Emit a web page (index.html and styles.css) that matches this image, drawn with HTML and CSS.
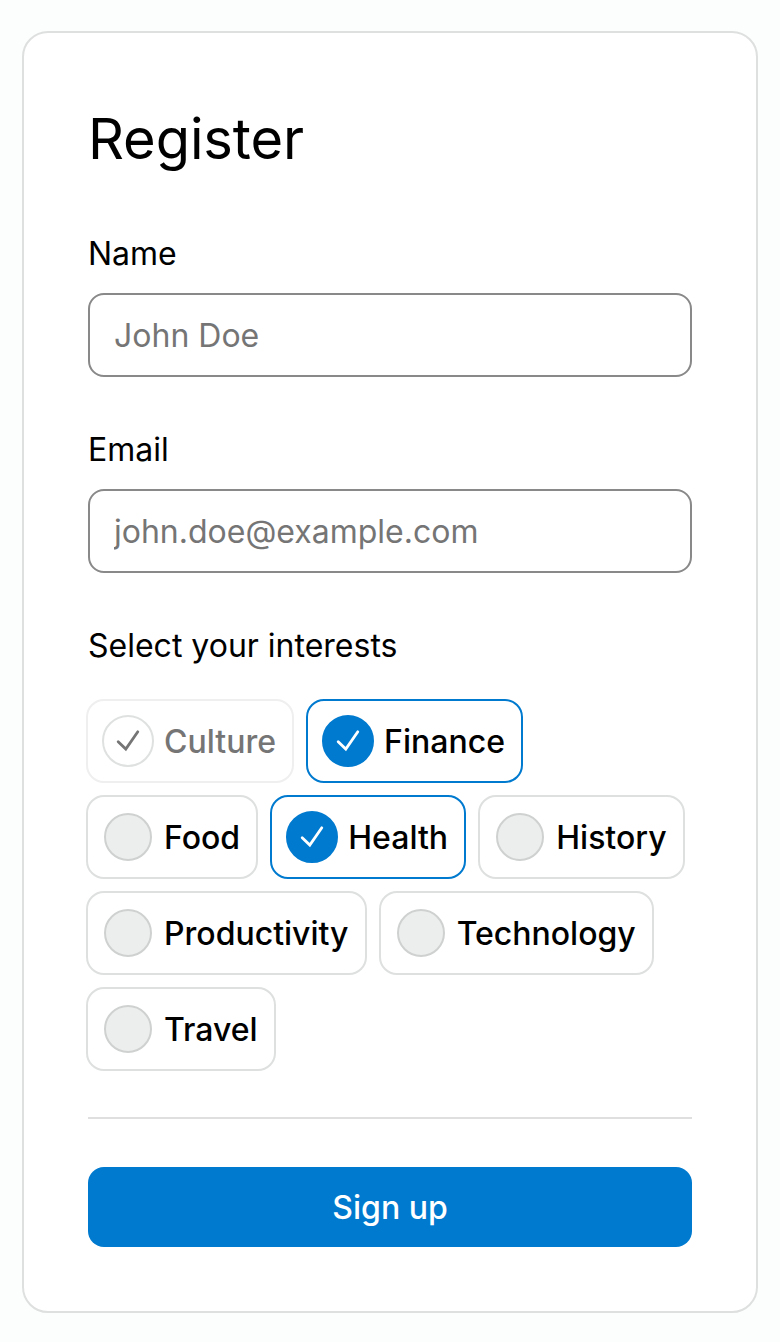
FILE: index.html
```html
<!DOCTYPE html>
<html lang="en">
<head>
<meta charset="utf-8">
<title>Register</title>
<link rel="stylesheet" href="styles.css">
</head>
<body>
<form class="card">
  <h1 class="title">Register</h1>
  <div class="field">
    <label class="label" for="name">Name</label>
    <input class="input" id="name" type="text" placeholder="John Doe">
  </div>
  <div class="field">
    <label class="label" for="email">Email</label>
    <input class="input" id="email" type="email" placeholder="john.doe@example.com">
  </div>
  <div class="label interests">Select your interests</div>
  <div class="chips">
    <span class="chip disabled"><span class="mark"><svg class="tick" viewBox="0 0 24 24"><path d="M2.2 12.8 L9.8 20 L21.8 2.8"/></svg></span>Culture</span>
    <span class="chip selected"><span class="mark"><svg class="tick" viewBox="0 0 24 24"><path d="M2.2 12.8 L9.8 20 L21.8 2.8"/></svg></span>Finance</span>
    <span class="chip"><span class="mark"></span>Food</span>
    <span class="chip selected"><span class="mark"><svg class="tick" viewBox="0 0 24 24"><path d="M2.2 12.8 L9.8 20 L21.8 2.8"/></svg></span>Health</span>
    <span class="chip"><span class="mark"></span>History</span>
    <span class="chip"><span class="mark"></span>Productivity</span>
    <span class="chip"><span class="mark"></span>Technology</span>
    <span class="chip"><span class="mark"></span>Travel</span>
  </div>
  <hr class="rule">
  <button class="submit" type="button">Sign up</button>
</form>
</body>
</html>
```

FILE: styles.css
```css
* { box-sizing: border-box; }
body {
  margin: 0;
  padding: 31px 22px 29px;
  background: #fcfefd;
  color: #000;
  font-family: Inter, "Liberation Sans", sans-serif;
  font-size: 32px;
}
.card {
  height: 1282px;
  padding: 72px 64px 64px;
  border: 2px solid #dedfdf;
  border-radius: 26px;
  background: #fff;
}
.title {
  margin: 0 0 57px;
  font-size: 56px;
  font-weight: 400;
  line-height: 68px;
  letter-spacing: -0.1px;
}
.field { margin-bottom: 49px; }
.label {
  display: block;
  margin-bottom: 15px;
  line-height: 48px;
}
.interests { margin-bottom: 29px; }
.input {
  display: block;
  width: 100%;
  height: 84px;
  padding: 0 24px;
  border: 2px solid #898989;
  border-radius: 16px;
  background: #fff;
  font: inherit;
}
.input::placeholder { color: #757575; opacity: 1; }
.chips {
  display: flex;
  flex-wrap: wrap;
  gap: 12px;
  margin: 0 -2px;
}
.chip {
  display: flex;
  align-items: center;
  gap: 12px;
  height: 84px;
  padding: 0 16.15px 0 16px;
  border: 2px solid #dedfdf;
  border-radius: 18px;
  font-weight: 500;
}
.mark {
  display: flex;
  align-items: center;
  justify-content: center;
  width: 48px;
  height: 48px;
  border: 2px solid #cfd1d1;
  border-radius: 50%;
  background: #eceeed;
}
.selected .mark, .disabled .mark { width: 52px; height: 52px; margin: 0 -2px; }
.selected { border-color: #007acf; }
.selected .mark { border-color: #007acf; background: #007acf; color: #fff; }
.disabled { border-color: #efefef; color: #757575; }
.disabled .mark { border-color: #dfe1e1; background: #fff; }
.tick {
  width: 24px;
  height: 24px;
  fill: none;
  stroke: currentColor;
  stroke-width: 2.8;
  stroke-linecap: round;
}
.rule {
  margin: 46px 0 48px;
  border: 0;
  border-top: 2px solid #dfdfdf;
}
.submit {
  display: block;
  width: 100%;
  height: 80px;
  border: 0;
  border-radius: 16px;
  background: #007acf;
  color: #fff;
  font: inherit;
  font-weight: 500;
}
```
